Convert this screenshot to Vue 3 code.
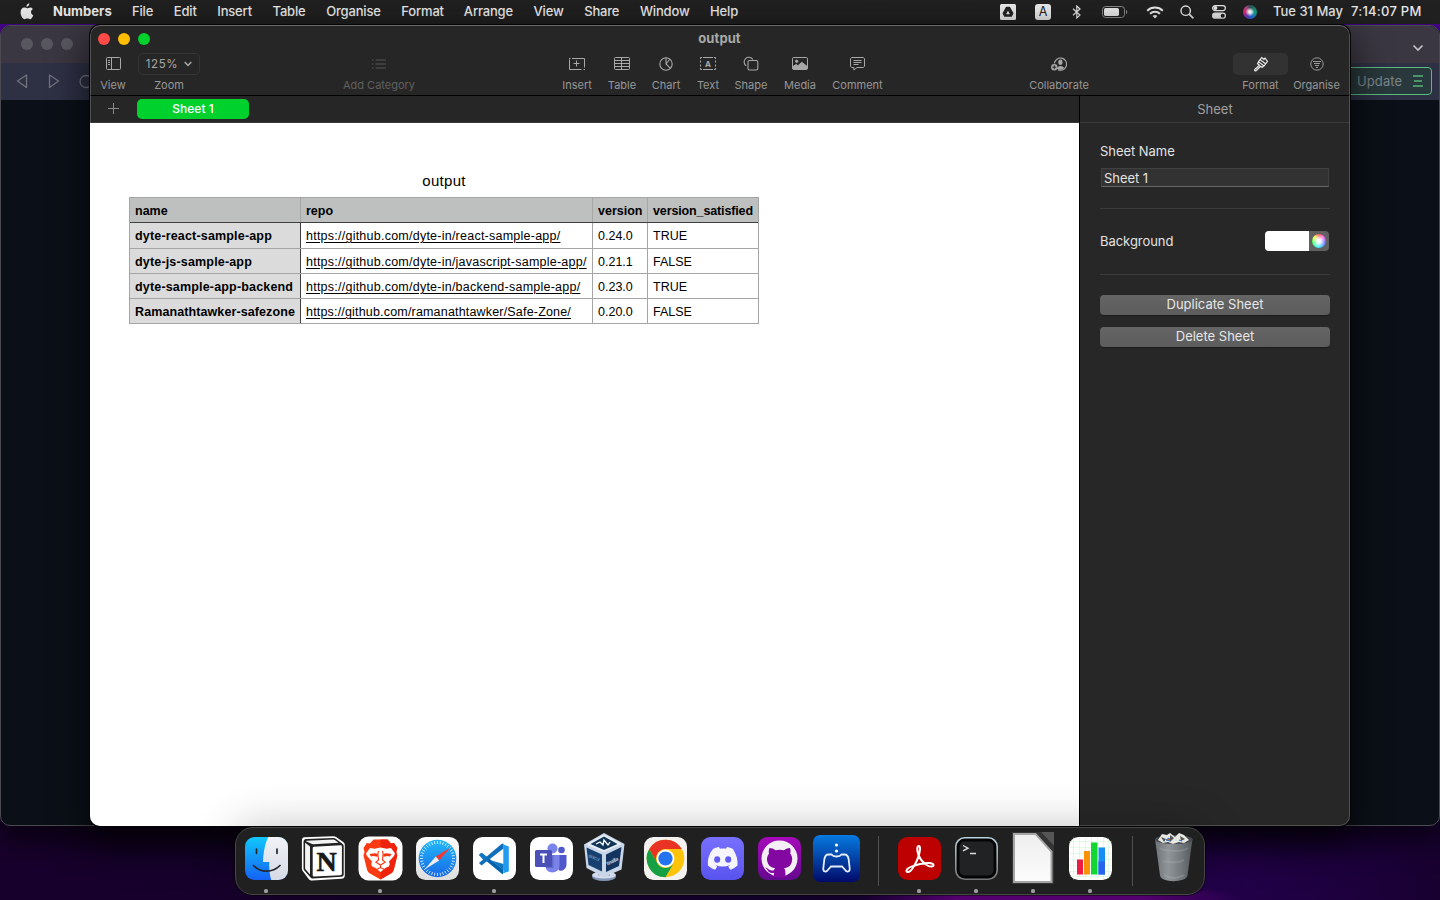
<script setup>
const menus = ['File', 'Edit', 'Insert', 'Table', 'Organise', 'Format', 'Arrange', 'View', 'Share', 'Window', 'Help']
const rows = [
  ['dyte-react-sample-app', 'https://github.com/dyte-in/react-sample-app/', '0.24.0', 'TRUE'],
  ['dyte-js-sample-app', 'https://github.com/dyte-in/javascript-sample-app/', '0.21.1', 'FALSE'],
  ['dyte-sample-app-backend', 'https://github.com/dyte-in/backend-sample-app/', '0.23.0', 'TRUE'],
  ['Ramanathtawker-safezone', 'https://github.com/ramanathtawker/Safe-Zone/', '0.20.0', 'FALSE'],
]
const ticks = Array.from({ length: 36 }, (_, i) => i * 10)
</script>

<template>
  <div class="desktop">
    <header class="menubar">
      <svg class="apple" width="14" height="17" viewBox="0 0 14 17"><path fill="#e6e6e6" d="M9.4.3c.1 1.900-1.300 3.400-3 3.500C6.200 2.100 7.700.500 9.400.3zM12.900 6C11.500 6.900 11 7.900 11 9c0 1.500.9 2.700 2.300 3.200-.8 2.200-2 4-3.300 4-1 0-1.500-.6-2.700-.6s-1.700.6-2.700.6C2.700 16.200.6 13 .6 9.300.6 6.400 2.300 4.500 4.400 4.500c1.100 0 2 .7 2.800.7.700 0 1.800-.8 3.200-.8 1 0 1.900.5 2.500 1.600z"/></svg>
      <b class="appname">Numbers</b>
      <nav class="menus"><span v-for="m in menus" :key="m">{{ m }}</span></nav>
      <div class="status">
        <span class="s1"><svg width="16" height="16" viewBox="0 0 16 16"><rect width="16" height="16" rx="1.500" fill="#e8e8e8"/><path d="M6.100 2.700h3.800l3.600 6.500-1.800 3.600H4.300L2.500 9.200z" fill="#222"/><path d="M8 6.800l1.900 3.400H6.100z" fill="#e8e8e8"/></svg></span>
        <span class="s2"><i class="abox">A</i></span>
        <span class="s3"><svg width="10" height="14" viewBox="0 0 10 14" fill="none" stroke="#e2e2e2" stroke-width="1.200"><path d="M1 3.800l7 6.200-3.200 3V1L8 4 1 10.200"/></svg></span>
        <span class="s4"><svg width="26" height="12" viewBox="0 0 26 12"><rect x=".5" y=".5" width="22" height="11" rx="3" fill="none" stroke="#888"/><rect x="2" y="2" width="15" height="8" rx="1.700" fill="#e6e6e6"/><path d="M24 4v4c1.700-.5 1.700-3.500 0-4" fill="#888"/></svg></span>
        <span class="s5"><svg width="18" height="13" viewBox="0 0 18 13" fill="none" stroke="#e6e6e6" stroke-width="2"><path d="M1.200 4.700c4.300-4.200 11.300-4.200 15.600 0M4 7.700c2.800-2.700 7.200-2.700 10 0"/><path d="M9 12.500L6.600 10c1.400-1.200 3.400-1.200 4.800 0z" fill="#e6e6e6" stroke="none"/></svg></span>
        <span class="s6"><svg width="14" height="14" viewBox="0 0 14 14" fill="none" stroke="#e6e6e6" stroke-width="1.400"><circle cx="5.700" cy="5.700" r="4.700"/><path d="M9.200 9.200l4.200 4.200" stroke-width="1.700"/></svg></span>
        <span class="s7"><svg width="14" height="14" viewBox="0 0 14 14"><rect x=".6" y=".6" width="12.800" height="5" rx="2.500" fill="none" stroke="#e6e6e6" stroke-width="1.200"/><circle cx="3.400" cy="3.100" r="2" fill="#e6e6e6"/><rect y="7.500" width="14" height="6.300" rx="3.150" fill="#e6e6e6"/><circle cx="10.700" cy="10.650" r="2" fill="#222"/></svg></span>
        <span class="s8"><i class="siri"></i></span>
        <span class="date">Tue 31 May</span><span class="time">7:14:07 PM</span>
      </div>
    </header>

    <section class="back">
      <div class="back-top">
        <i></i><i></i><i></i>
        <svg width="12" height="8" viewBox="0 0 12 8" fill="none" stroke="#c5c5c8" stroke-width="1.600"><path d="M1.500 1.500L6 6l4.500-4.500"/></svg>
      </div>
      <div class="back-nav">
        <svg width="90" height="20" viewBox="0 0 90 20" fill="none" stroke="#70727e" stroke-width="1.300" stroke-linejoin="round"><path d="M26.500 4v12.500L17.500 10z M49.500 4v12.500l9-6.500z M90 6a6 6 0 1 0 0 9"/></svg>
        <div class="update"><span>Update</span><svg width="10" height="12" viewBox="0 0 10 12" stroke="#55b37a" stroke-width="1.500"><path d="M0 1h10M1 6h8M0 11h10"/></svg></div>
      </div>
    </section>

    <main class="window">
      <div class="titlebar">
        <div class="lights"><i class="red"></i><i class="yellow"></i><i class="green"></i></div>
        <h1>output</h1>
      </div>
      <div class="toolbar">
        <div class="tool t-view"><span class="ic"><svg width="16" height="13" viewBox="0 0 16 13" fill="none" stroke="#a8a8a8"><rect x="1.500" y=".5" width="14" height="12" rx="1"/><path d="M6.500 1v11M3 3.500h2M3 5.500h2M3 7.500h2"/></svg></span><label>View</label></div>
        <div class="tool t-zoom"><span class="ic zoombox">125%<svg width="8" height="6" viewBox="0 0 8 6" fill="none" stroke="#aaa" stroke-width="1.500"><path d="M.7 1L4 4.400 7.300 1"/></svg></span><label>Zoom</label></div>
        <div class="tool t-cat"><span class="ic"><svg width="14" height="10" viewBox="0 0 14 10" stroke="#555" stroke-width="1.100"><path d="M0 1h1.500M0 5h1.500M0 9h1.500M3.500 1H14M3.500 5H14M3.500 9H14"/></svg></span><label>Add Category</label></div>
        <div class="tool t-insert"><span class="ic"><svg width="16" height="13" viewBox="0 0 16 13" fill="none" stroke="#a8a8a8"><path d="M.5 2.500v10h12M3 1.500h12.500v9M7.500 3.500v6M4.500 6.500h6"/><path d="M0 1.500h1.500M14.500 12.500H16"/></svg></span><label>Insert</label></div>
        <div class="tool t-table"><span class="ic"><svg width="16" height="13" viewBox="0 0 16 13" fill="none" stroke="#a8a8a8"><rect x=".5" y=".5" width="15" height="12" rx="1"/><path d="M1 3.500h14M1 6.500h14M1 9.500h14M7.500 1v11"/></svg></span><label>Table</label></div>
        <div class="tool t-chart"><span class="ic"><svg width="14" height="14" viewBox="0 0 14 14" fill="none" stroke="#a8a8a8" stroke-width="1.100"><circle cx="7" cy="7" r="6.200"/><path d="M7 .7V7l4.500 4.400M7 7l4-5"/></svg></span><label>Chart</label></div>
        <div class="tool t-text"><span class="ic"><svg width="16" height="13" viewBox="0 0 16 13" fill="none" stroke="#a8a8a8"><path d="M3 .5h10M3 12.500h10M.5 3.500v2M.5 7.500v2M15.500 3.500v2M15.500 7.500v2M.5 2V.5H2M14 .5h1.500V2M.5 11v1.500H2M14 12.500h1.500V11"/><text x="8" y="9.500" text-anchor="middle" font-family="Inter, sans-serif" font-weight="700" font-size="8" fill="#a8a8a8" stroke="none">A</text></svg></span><label>Text</label></div>
        <div class="tool t-shape"><span class="ic"><svg width="16" height="15" viewBox="0 0 16 15" fill="none" stroke="#a8a8a8" stroke-width="1.100"><path d="M3.300 9.900A4.700 4.700 0 1 1 9.900 3.600"/><rect x="5" y="4.500" width="9.800" height="9.500" rx="1.500"/></svg></span><label>Shape</label></div>
        <div class="tool t-media"><span class="ic"><svg width="16" height="13" viewBox="0 0 16 13" fill="none" stroke="#a8a8a8"><rect x=".5" y=".5" width="15" height="12" rx="1.200"/><circle cx="4.700" cy="4.300" r="1.200" fill="#a8a8a8"/><path d="M1 12V9.500l3-2 2 1.200 3.800-3.400 5.200 4V12z" fill="#a8a8a8"/></svg></span><label>Media</label></div>
        <div class="tool t-comment"><span class="ic"><svg width="15" height="14" viewBox="0 0 15 14" fill="none" stroke="#a8a8a8"><path d="M2 .5h11c.8 0 1.500.7 1.500 1.500v7c0 .8-.7 1.500-1.500 1.500H7L3.900 13v-2.500H2C1.200 10.500.5 9.800.5 9V2C.5 1.200 1.200.5 2 .5zM3.500 3.500h8M3.500 5.500h8M3.500 7.500h5"/></svg></span><label>Comment</label></div>
        <div class="tool t-collab"><span class="ic"><svg width="16" height="14" viewBox="0 0 16 14"><path d="M3.400 6.500A6.100 6.100 0 1 1 7 12.700" fill="none" stroke="#a8a8a8" stroke-width="1.100"/><ellipse cx="9.400" cy="5.300" rx="2.100" ry="2.700" fill="#a8a8a8"/><path d="M6 11.800c0-2 1.600-2.600 3.400-2.900 2 .3 3.500.9 3.700 2-2 2-4.900 2.500-7.100.9z" fill="#a8a8a8"/><circle cx="3.300" cy="10.200" r="3.200" fill="#a8a8a8"/><path d="M3.300 8.300v3.800M1.400 10.200h3.800" stroke="#262626"/></svg></span><label>Collaborate</label></div>
        <div class="tool t-format"><span class="ic active"><svg width="16" height="16" viewBox="0 0 16 16" fill="none" stroke="#e8e8e8" stroke-width="1.200" stroke-linejoin="round"><path d="M8.700 1.500l2.300 2 1-1.500 2.500 3.300-3.500 4.700-5.500-4.400zM7.200 3.800l5.600 4.300M6 5.600L4.500 7.700l2 1.500-4.800 4.300c-.4 1 .6 1.700 1.300 1.300l4.700-4.600 1.600 1.200 1.700-1.700"/></svg></span><label>Format</label></div>
        <div class="tool t-organise"><span class="ic"><svg width="14" height="14" viewBox="0 0 14 14" fill="none" stroke="#999"><circle cx="7" cy="7" r="6.200"/><path d="M3 4.500h8M4 6.500h6M5 8.500h4M6 10.500h2" stroke-width="1.200"/></svg></span><label>Organise</label></div>
      </div>
      <div class="body">
        <div class="left">
          <div class="tabs"><span class="plus"></span><span class="tab">Sheet 1</span></div>
          <div class="canvas">
            <h2>output</h2>
            <div class="sheet">
              <div class="row head"><span>name</span><span>repo</span><span>version</span><span>version_satisfied</span></div>
              <div v-for="r in rows" :key="r[0]" class="row"><span>{{ r[0] }}</span><span><u>{{ r[1] }}</u></span><span>{{ r[2] }}</span><span>{{ r[3] }}</span></div>
            </div>
          </div>
        </div>
        <aside>
          <div class="aside-title">Sheet</div>
          <div class="panel">
            <p class="lbl">Sheet Name</p>
            <div class="field">Sheet 1</div>
            <div class="bgrow"><p class="lbl">Background</p><div class="well"><span></span><i></i></div></div>
            <button>Duplicate Sheet</button>
            <button>Delete Sheet</button>
          </div>
        </aside>
      </div>
    </main>

    <footer class="dock">
      <span class="app run"><svg viewBox=".5 .5 43 43"><defs><linearGradient id="fb" x2="0" y2="1"><stop stop-color="#12c8fb"/><stop offset="1" stop-color="#1461f4"/></linearGradient><linearGradient id="fw" x2="0" y2="1"><stop stop-color="#f2f3f6"/><stop offset="1" stop-color="#d5dae6"/></linearGradient><clipPath id="fc"><rect x=".5" y=".5" width="43" height="43" rx="9.500"/></clipPath></defs><g clip-path="url(#fc)"><path fill="url(#fb)" d="M0 0h44v44H0z"/><path fill="url(#fw)" d="M24 0c-3.500 7-5 15-5.500 25.500h6.300c-.3 6 .3 12 2 18.500H44V0z"/></g><path d="M12 12.500v4.300M32.500 12.500v4.300M9 29c7 7.500 19 7.500 26.500 0" fill="none" stroke="#25262e" stroke-width="1.700" stroke-linecap="round"/></svg></span>
      <span class="app"><svg viewBox=".5 .5 43 43"><path d="M3 .8L31.500-.2c1.800 0 2.800.5 4.200 1.500l6 4.300c1.300 1 1.600 2 1.600 3.700v29.500c0 2.200-1 3.300-3.200 3.500L11 43.900c-2 .1-3-.4-4.200-2L1.600 35C.7 33.800.4 33 .4 31.500V4.400C.4 2.200 1 1 3 .8z" fill="#fff"/><path d="M4.500 2.600L31.500 1.500c1.300 0 2 .3 3 1l5.500 4c2 1.300 2.200 2 2.200 3.300v28c0 1.500-.7 2.200-2.200 2.400L11.500 42c-1.300 0-2-.3-2.700-1.200L2.800 34c-.7-.9-.8-1.500-.8-2.500v-26c0-1.600.8-2.800 2.500-2.900z" fill="#222"/><path d="M5.500 4.300l26-1.200c1 0 1.500.2 2.200.7l3.500 2.500-25.400 1.500c-1 0-1.600-.2-2.300-.7L5 5c-.4-.4-.2-.7.500-.7zM3.600 6.300L8.500 10v28L4 32.700c-.3-.4-.4-.8-.4-1.300z" fill="#f4f4f4"/><path d="M12.500 10.300l26.500-1.500c.9 0 1.400.5 1.400 1.400V37c0 1-.5 1.600-1.500 1.700l-26 1.400c-1.100.1-1.700-.5-1.700-1.600V11.900c0-1 .4-1.500 1.300-1.600z" fill="#fff"/><text x="25.200" y="34.800" text-anchor="middle" font-family="Liberation Serif, serif" font-size="28" font-weight="700" fill="#191919" stroke="#191919" stroke-width=".6">N</text></svg></span>
      <span class="app run"><svg viewBox=".5 .5 43 43"><rect width="44" height="44" rx="10" fill="#fff"/><path d="M15 3h14l3.500 4 3-.5 3.300 5-1 4 1 3.500-3.500 14c-.5 2-1.500 3-3 4L22 43l-10.500-6c-1.500-1-2.500-2-3-4L5 19l1-3.500-1-4 3.300-5 3 .5z" fill="#fb3b12"/><path d="M22 3h7l3.500 4 3-.5 3.300 5-1 4 1 3.500-3.500 14c-.5 2-1.500 3-3 4L22 43z" fill="#ef220d"/><path d="M11.500 11.500l4.500.7 6-1.200 6 1.200 4.500-.7 4 5.500-1 2.500-5 5.500.8 2.700-1 2.300-3 1.300-5.300 4.200-5.300-4.200-3-1.300-1-2.300.8-2.700-5-5.500-1-2.500z" fill="#fff"/><path d="M11 17.500l5.500-.8 2.800.8-.4 2.800-4-.8-2.400.4zM33 17.500l-5.500-.8-2.800.8.4 2.800 4-.8 2.400.4z" fill="#f3320f"/><path d="M20 14.500l-.6 3 .6 6-2.600 2.200L22 28.500l4.600-2.800-2.600-2.200.6-6-.6-3M22 28v3M18 33l4-2 4 2" fill="none" stroke="#f3320f" stroke-width="1.100"/></svg></span>
      <span class="app"><svg viewBox=".5 .5 43 43"><defs><linearGradient id="sf" x2="0" y2="1"><stop stop-color="#20b9fb"/><stop offset="1" stop-color="#1768e5"/></linearGradient><linearGradient id="sw" x2="0" y2="1"><stop stop-color="#fff"/><stop offset="1" stop-color="#ddd"/></linearGradient></defs><rect x=".5" y=".5" width="43" height="43" rx="9.500" fill="url(#sw)"/><circle cx="22" cy="22" r="18.800" fill="url(#sf)"/><path v-for="t in ticks" :key="t" d="M22 4.500v3" stroke="#e1f4ff" stroke-width=".8" :transform="`rotate(${t} 22 22)`"/><path d="M35 11L20.300 20l3.400 4z" fill="#f13737"/><path d="M9 33l11.300-13 3.400 4z" fill="#eee"/></svg></span>
      <span class="app run"><svg viewBox=".5 .5 43 43"><rect x=".5" y=".5" width="43" height="43" rx="9.500" fill="#fff"/><path d="M6.500 18.500l2.500-2.200 21.500 16.500V38L29 37z" fill="#0065ae"/><path d="M6.500 26.500L9 29 31 12V7l-2 .5z" fill="#0f6fbb"/><path d="M29 7.200L36.300 10v25L29 37.200c1 .1 1.800-.4 1.800-1.600V8.700c0-1-.8-1.500-1.800-1.500z" fill="#1f9cf0"/><path d="M6.500 18.500L9 16.300l5.500 4.200-3.400 3.200zM31 27.500v6L19 24z" fill="#1378c4"/></svg></span>
      <span class="app"><svg viewBox=".5 .5 43 43"><rect x=".5" y=".5" width="43" height="43" rx="9.500" fill="#fff"/><circle cx="23" cy="12" r="5" fill="#7a83eb"/><circle cx="32" cy="13.500" r="3.300" fill="#5059c9"/><path d="M29 18.500h8v9c0 6-5.500 8-8 6z" fill="#5059c9"/><path d="M16 18.500h14v11c0 8-14 9-14 0z" fill="#7b83eb"/><path d="M20 18.500h4v13h-7l-1-2z" fill="#626bc9"/><rect x="5.500" y="13.500" width="17" height="17" rx="1.500" fill="#4b50b8"/><path d="M10.500 18h7M14 18v8.500" stroke="#fff" stroke-width="2"/></svg></span>
      <span class="app vb"><svg viewBox="0 0 44 50"><defs><linearGradient id="vs" x2="1"><stop stop-color="#a7b8cf"/><stop offset=".5" stop-color="#fff"/><stop offset="1" stop-color="#8ca1be"/></linearGradient></defs><ellipse cx="22" cy="43.500" rx="12" ry="4.500" fill="#8296b8"/><ellipse cx="22" cy="42" rx="12" ry="3.500" fill="#d3dcec"/><path d="M16 36h12v7H16z" fill="url(#vs)"/><path d="M2 11.500L22 0l20.500 11-3 25.500L22 44 4.500 35z" fill="#c8d6e8"/><path d="M22 1.500L40 11 22 19 4 11.500z" fill="#e7edf5"/><path d="M22 3.500l13.500 7.500L22 17 8.500 11z" fill="#123456"/><path d="M4.500 14.500L20 21.500v17L6.500 32z" fill="#173f70"/><path d="M24 21.500L39.500 14 37 33l-13 6z" fill="#12345f"/><path d="M14 11l4-2 3 3 1-5 4 5 2-3" fill="none" stroke="#fff" stroke-width="1.300"/><text transform="translate(6 24) rotate(22)" textLength="12" lengthAdjust="spacingAndGlyphs" font-family="Inter, sans-serif" font-size="4" font-weight="700" fill="#7e9abd">ORACLE</text><text transform="translate(25.500 32.500) rotate(-26)" textLength="12.500" lengthAdjust="spacingAndGlyphs" font-family="Inter, sans-serif" font-size="5" font-weight="700" fill="#e6edf7">VirtualBox</text></svg></span>
      <span class="app"><svg viewBox=".5 .5 43 43"><rect x=".5" y=".5" width="43" height="43" rx="9.500" fill="#f3f2f1"/><circle cx="22" cy="22" r="18.800" fill="#ffc30a"/><path d="M5.700 12.600A18.800 18.800 0 0 1 38.300 12.600H22a9.400 9.400 0 0 0-8.200 14.100z" fill="#e93324"/><path d="M5.700 12.600A18.800 18.800 0 0 0 22 40.800l8.100-14.100a9.400 9.400 0 0 1-16.300 0z" fill="#15a046"/><circle cx="22" cy="22" r="8.900" fill="#fff"/><circle cx="22" cy="22" r="7.100" fill="#2374ee"/></svg></span>
      <span class="app"><svg viewBox=".5 .5 43 43"><defs><linearGradient id="dc" x2="0" y2="1"><stop stop-color="#7770ff"/><stop offset="1" stop-color="#5953ee"/></linearGradient></defs><rect x=".5" y=".5" width="43" height="43" rx="9.500" fill="url(#dc)"/><path d="M12.500 12.500c2-1.200 4-1.700 6-2l1 1.700c2-.3 4-.3 6 0l1-1.700c2 .3 4 .8 6 2 3.500 5.500 5 11 4.500 16.500-2 2-4.500 3.300-7.300 4.200l-2-3.200 2-1.500c-5 2-10 2-15 0l2 1.500-2 3.200c-2.800-.9-5.300-2.200-7.300-4.200-.6-6 1-11.500 5.100-16.500z" fill="#f5f5fb"/><ellipse cx="16.700" cy="23" rx="3" ry="3.300" fill="#615bf1"/><ellipse cx="27.700" cy="23" rx="3" ry="3.300" fill="#615bf1"/></svg></span>
      <span class="app"><svg viewBox=".5 .5 43 43"><defs><linearGradient id="gh" x2="0" y2="1"><stop stop-color="#a709ba"/><stop offset="1" stop-color="#650890"/></linearGradient></defs><rect x=".5" y=".5" width="43" height="43" rx="9.500" fill="url(#gh)"/><circle cx="22" cy="22" r="18" fill="#f3eff5"/><path d="M12 11.500c2 0 4 .8 6 2.200a20 20 0 0 1 8.500 0c2-1.400 4-2.200 6-2.200.8 2.500.7 4 .2 5.500 2.500 3 2.500 7 .8 10.500-1.300 2.500-4 3.800-7 4.300 1 1 1.400 2.200 1.400 4v4.500c-4 1-8 1-11.500 0v-4c-3 .8-5 0-6.200-2.200-.8-1.500-1.500-2.200-2.500-2.800 3-.5 4 4 8.800 2.400.2-1 .5-1.500 1.200-2-3-.5-5.500-1.600-7-4.200-1.800-3.400-1.700-7.500.8-10.500-.5-1.500-.4-3 .5-5.500z" fill="#8308a2"/></svg></span>
      <span class="app big"><svg viewBox=".5 .5 47 47"><defs><linearGradient id="ps" x2="0" y2="1"><stop stop-color="#067ae0"/><stop offset="1" stop-color="#020b6b"/></linearGradient></defs><rect x=".5" y=".5" width="47" height="47" rx="7" fill="url(#ps)"/><circle cx="24" cy="10.500" r="1.600" fill="#fff"/><circle cx="24" cy="16.500" r="1.600" fill="#fff"/><path d="M16 20h3c1 1.500 2 2 5 2s4-.5 5-2h3c2.500 0 3.700 1.700 4.200 5l1 9c.2 3.500-3 4-4.500 1.500L29.500 32h-11l-3.200 3.500c-1.500 2.500-4.700 2-4.500-1.500l1-9c.5-3.300 1.700-5 4.200-5z" fill="none" stroke="#e6eefb" stroke-width="1.800"/></svg></span>
      <i class="sep"></i>
      <span class="app run"><svg viewBox=".5 .5 43 43"><rect x=".5" y=".5" width="43" height="43" rx="9.500" fill="#bd0000"/><path d="M21.500 9.500c-2.500 0-2 5-.5 9 1.500 3.700 4.500 8 9 10.500 3 1.600 6 1.500 6-.5 0-2.500-7.500-2.500-13.500-1-6 1.400-13 4-13.500 6.500-.4 2.500 3.500 2 6-2 3-4.500 6-11 7-16 .8-4 .8-6.500-.5-6.500z" fill="none" stroke="#fff" stroke-width="2"/></svg></span>
      <span class="app run"><svg viewBox=".5 .5 43 43"><defs><linearGradient id="tm" x2="0" y2="1"><stop stop-color="#b9d2dd"/><stop offset="1" stop-color="#777"/></linearGradient></defs><rect x="1.300" y="1.300" width="41.400" height="41.400" rx="9" fill="#050505" stroke="url(#tm)" stroke-width="1.600"/><rect x="5" y="5" width="34" height="34" rx="5" fill="#202224"/><path d="M8.500 9l5 2.700-5 2.700M15.500 17h6" fill="none" stroke="#ddd" stroke-width="1.400"/></svg></span>
      <span class="app run lo"><svg viewBox="0 0 44 54" preserveAspectRatio="none"><defs><linearGradient id="lg" x2="0" y2="1"><stop stop-color="#eee"/><stop offset="1" stop-color="#fcfcfc"/></linearGradient></defs><path d="M1 1h42v53H1z" fill="#343434"/><path d="M30 1h13v14z" fill="#555"/><path d="M3 3h21.500L40.500 21v31H3z" fill="url(#lg)" stroke="#a5a5a5" stroke-width="2"/></svg></span>
      <span class="app run"><svg viewBox=".5 .5 43 43"><rect x=".5" y=".5" width="43" height="43" rx="9.500" fill="#fff"/><path d="M5 1v42M11 1v42M17 1v42M23 1v42M29 1v42M35 1v42M40 2v40M1 5h42M1 11h42M1 17h42M1 23h42M1 29h42M1 35h42M2 40h40" stroke="#d2f5d5" stroke-width=".6"/><path d="M8.500 23h6v15h-6z" fill="#ef1b47"/><path d="M15.500 14.500h6V38h-6z" fill="#fb9108"/><path d="M22.500 6h6.500v32h-6.500z" fill="#14d633"/><path d="M30 11h6.500v27H30z" fill="#168ff5"/><path d="M30 25h6.500v13H30z" fill="#2763ec"/></svg></span>
      <i class="sep"></i>
      <span class="app trash"><svg viewBox="0 0 44 52"><defs><linearGradient id="tr" x2="1"><stop stop-color="#6d7377"/><stop offset=".35" stop-color="#8f9598"/><stop offset=".7" stop-color="#73787c"/><stop offset="1" stop-color="#53595d"/></linearGradient></defs><path d="M3 7l5 36.500C9 51 34 51 35.500 43.500L40.500 7z" fill="url(#tr)"/><ellipse cx="21.800" cy="7.500" rx="18.800" ry="4.500" fill="#444a4d"/><path d="M6 8l4-6 5 1 3-2 5 4 4-4 5 2 5 5-5 3-5-1-6 2-5-2-5 1z" fill="#e7e7e4"/><path d="M9 5l5 2-2 3zM18 3l4 3-4 4zM28 4l5 3-4 2z" fill="#555"/><path d="M14 8l3-2 1 3zM27 8l3 1" fill="#df7335" stroke="#2870c3"/><path d="M8 16c5 4 22 4 28 0M11 30c5-3 9 4 21-2M12 43c7 4 14 4 20 0" fill="none" stroke="#c1c5c7" stroke-opacity=".22" stroke-width="2"/></svg></span>
    </footer>
  </div>
</template>

<style>
html, body { margin: 0; overflow: hidden; background: #10001f; }
</style>
<style scoped>
* { box-sizing: border-box; }
i { font-style: normal; }
svg { display: block; flex: none; }
.desktop { position: relative; width: 1440px; height: 900px; overflow: hidden; font-family: Inter, "Liberation Sans", sans-serif; background: linear-gradient(#45008c, #45008c) 0 24px / 100% 12px no-repeat, radial-gradient(ellipse 190px 22px at 1050px 900px, #5e007c 0 50%, transparent 100%), linear-gradient(90deg, #18002c 0, #14002c 55%, #23004b 84%, #1e0040 92%, #180030 100%); }
.menubar { display: flex; align-items: center; height: 24px; padding-left: 20px; background: linear-gradient(90deg, #202020, #212121); color: #e9e9e9; font-size: 13px; font-weight: 500; line-height: 22px; white-space: nowrap; }
.apple { margin-top: -2px; }
.appname { margin: -2px 0 0 19px; width: 59px; font-weight: 700; letter-spacing: .05px; }
.menus { display: flex; gap: 20.600px; margin: -2px 0 0 20px; letter-spacing: -.17px; }
.menus span:nth-child(7) { margin-left: -.6px; }
.status { display: flex; align-items: center; margin-left: auto; width: 449px; height: 24px; }
.status > span { display: flex; justify-content: center; flex: none; }
.s1 { width: 34px; } .s2 { width: 36px; } .s3 { width: 32px; } .s4 { width: 44px; } .s5 { width: 35px; } .s6 { width: 29px; } .s7 { width: 35px; } .s8 { width: 28px; }
.abox { width: 16px; height: 16px; border-radius: 3px; background: #e8e8e8; color: #222; font-size: 12.500px; font-weight: 400; line-height: 16px; text-align: center; }
.siri { width: 14px; height: 14px; border-radius: 50%; background: radial-gradient(circle at 50% 50%, #fff 0 12%, transparent 45%), conic-gradient(#304e58, #14a485 25%, #2871e5 45%, #653ac0 60%, #e82578 75%, #a34c82 90%, #304e58); }
.status .date { margin: -2px 0 0 9px; width: 78px; justify-content: flex-start; letter-spacing: 0; }
.status .time { margin-top: -2px; letter-spacing: .25px; }

.back { position: absolute; left: 0; top: 25px; width: 1440px; height: 801px; border: 1px solid #4b4a51; border-radius: 10px; overflow: hidden; background: #0b1018; box-shadow: 0 14px 30px rgba(0,0,0,.65); }
.back-top { display: flex; align-items: center; height: 37px; padding: 0 15px 2px 20px; gap: 8px; background: #3b3742; }
.back-top i { width: 12px; height: 12px; border-radius: 50%; background: #58565f; }
.back-top svg { margin-left: auto; margin-top: 9px; }
.back-nav { display: flex; align-items: center; justify-content: space-between; height: 37px; padding: 0 7px 2px 0; background: #2e3044; }
.back-nav svg { margin-left: -1px; }
.update { display: flex; align-items: center; justify-content: space-between; width: 90px; height: 28px; padding: 0 8px 0 14px; border: 1px solid #58bd80; border-radius: 4px; background: #29383c; color: #7c858b; font-size: 13px; letter-spacing: .1px; }

.window { position: absolute; left: 90px; top: 25px; width: 1260px; height: 801px; border-radius: 10px; background: #262626; box-shadow: 0 0 0 1px #050505, 0 16px 36px 4px rgba(0,0,0,.62); overflow: hidden; display: flex; flex-direction: column; }
.window::after { content: ""; position: absolute; inset: 0; border-radius: 10px; border: 1px solid rgba(255,255,255,.2); border-top-color: rgba(255,255,255,.32); pointer-events: none; }
.titlebar { display: grid; grid-template-columns: 1fr auto 1fr; align-items: center; height: 27px; padding: 1px 1px 0 8px; }
.lights { display: flex; gap: 8px; }
.lights i { width: 12px; height: 12px; border-radius: 50%; }
.red { background: #ff4b47; } .yellow { background: #ffbd04; } .green { background: #00d12c; }
h1 { margin: -2px 8px 0 0; font-size: 13px; line-height: 20px; font-weight: 700; letter-spacing: .1px; color: #a8a8a8; }
.toolbar { display: flex; height: 44px; border-bottom: 1px solid #000; }
.tool { display: flex; flex-direction: column; align-items: center; flex: none; color: #979797; font-size: 11px; white-space: nowrap; }
.tool label { line-height: 14px; margin-top: 3px; letter-spacing: 0; }
.ic { display: flex; align-items: center; justify-content: center; height: 22px; margin-top: 1px; padding-bottom: 1px; color: #a8a8a8; }
.t-view { width: 40px; margin-left: 3px; } .t-zoom { width: 62px; margin-left: 5px; }
.zoombox { width: 62px; padding-bottom: 0; gap: 6px; border: 1px solid #363636; border-radius: 5px; font-size: 11.500px; letter-spacing: .6px; }
.t-cat { width: 90px; margin-left: 134px; } .t-cat.tool { color: #606060; }
.t-insert { width: 44px; margin-left: 131px; } .t-table { width: 44px; margin-left: 1px; } .t-chart { width: 42px; margin-left: 1px; } .t-text { width: 40px; margin-left: 1px; } .t-shape { width: 44px; margin-left: 1px; } .t-media { width: 44px; margin-left: 5px; } .t-comment { width: 61px; margin-left: 5px; }
.t-collab { width: 80px; margin-left: 131px; } .t-format { width: 55px; margin-left: 134px; } .t-organise { width: 55px; margin-left: 1px; }
.active { width: 55px; border-radius: 5px; background: #323232; }
.body { display: flex; flex: 1; }
.left { width: 989px; display: flex; flex-direction: column; }
.tabs { display: flex; align-items: center; height: 27px; padding: 0 0 2px 18px; border-bottom: 1px solid #393939; }
.plus { width: 11px; height: 11px; background: linear-gradient(#8b8b8b, #8b8b8b) 50% 50% / 11px 1px no-repeat, linear-gradient(#8b8b8b, #8b8b8b) 50% 50% / 1px 11px no-repeat; }
.tab { position: relative; top: 1px; margin-left: 18px; width: 112px; height: 20px; border-radius: 5px; background: #00d12d; color: #fff; font-size: 12px; font-weight: 500; line-height: 20px; text-align: center; }
.canvas { flex: 1; padding-left: 39px; background: #fff; color: #000; font-family: "Liberation Sans", Arial, sans-serif; }
h2 { margin: 48px 0 0; width: 630px; font-size: 15px; font-weight: 400; line-height: 20px; letter-spacing: .3px; text-align: center; }
.sheet { width: 630px; margin-top: 6px; border: 1px solid #a5a5a5; border-top: 0; font-size: 12.500px; }
.row { display: grid; grid-template-columns: 170px 292px 55px 111px; height: 25px; border-top: 1px solid #a5a5a5; line-height: 26px; white-space: nowrap; }
.row > span { height: 24px; padding-left: 5px; overflow: hidden; border-left: 1px solid #a5a5a5; }
.row > span:first-child { border-left: 0; font-weight: 700; letter-spacing: .17px; background: #dbdbdb; }
.row:last-child > span:first-child { letter-spacing: .1px; }
.row:not(.head) > span:nth-child(2) { border-left-color: #3f3f3f; }
.row.head > span { font-weight: 700; letter-spacing: 0; background: #bdc0bf; }
.row.head > span:last-child { letter-spacing: -.13px; }
.head + .row { height: 26px; border-top-color: #3f3f3f; }
.head + .row > span { height: 25px; }
u { letter-spacing: .24px; text-underline-offset: 2px; text-decoration-thickness: 1px; }
.row:last-child u { letter-spacing: .18px; }
aside { width: 271px; border-left: 1px solid #000; background: #272727; }
.aside-title { height: 27px; border-bottom: 1px solid #393939; color: #a0a0a0; font-size: 13px; line-height: 27px; text-align: center; }
.panel { padding: 18px 20px; color: #e2e2e2; font-size: 13px; letter-spacing: -.05px; }
.lbl { margin: 0; line-height: 20px; }
.field { margin: 7px 1px 21px; height: 19px; padding-left: 2px; border: 1px solid #414141; border-bottom-color: #686868; background: #323232; line-height: 19px; }
.bgrow { display: flex; align-items: center; justify-content: space-between; height: 67px; margin-bottom: 20px; padding-bottom: 2px; border-top: 1px solid #3b3b3b; border-bottom: 1px solid #3b3b3b; }
.well { display: flex; align-items: center; justify-content: space-between; width: 64px; height: 20px; margin-right: 1px; padding-right: 3px; border-radius: 4px; background: #606060; overflow: hidden; }
.well span { width: 44px; height: 20px; background: #fff; }
.well i { width: 14px; height: 14px; border-radius: 50%; background: radial-gradient(circle, #fff 0 15%, transparent 70%), conic-gradient(#ff5454, #ff58e4 45deg, #695cff 100deg, #38baff 160deg, #37ffe3 200deg, #47ff59 260deg, #efff46 310deg, #ff5454); }
button { display: block; width: 230px; height: 20px; margin: 0 0 12px; padding: 0 0 2px; border: 0; border-radius: 4px; background: linear-gradient(#656565, #5c5c5c); box-shadow: 0 1px 1px rgba(0,0,0,.3); color: #e6e6e6; font: 400 13px/18px Inter, sans-serif; }

.dock { position: absolute; left: 235px; top: 827px; width: 970px; height: 68px; padding: 9px 0 0 9px; display: flex; gap: 14px; border: 1px solid #464646; border-radius: 18px; background: #202020; box-shadow: 0 0 0 1px rgba(0,0,0,.5), 0 0 44px rgba(0,0,0,.24); }
.app { position: relative; flex: none; width: 43px; height: 43px; }
.app svg { width: 43px; height: 43px; overflow: visible; }
.run::after { content: ""; position: absolute; left: 19px; top: 52px; width: 4px; height: 4px; border-radius: 1.500px; background: #9b9b9b; }
.app.vb { margin-top: -4px; height: 50px; } .app.vb svg { width: 44px; height: 50px; margin-left: -5px; }
.app.big svg { width: 47px; height: 47px; margin: -2px 0 0 -2px; }
.app.lo { margin-top: -6px; } .app.lo svg { width: 44px; height: 53px; margin-left: -1px; } .lo.run::after { top: 58px; }
.sep { width: 1px; height: 50px; margin: -1px 5px 0 6px; background: #505050; }
.app.trash { margin-top: -5px; height: 52px; } .app.trash svg { width: 44px; height: 52px; }
</style>
